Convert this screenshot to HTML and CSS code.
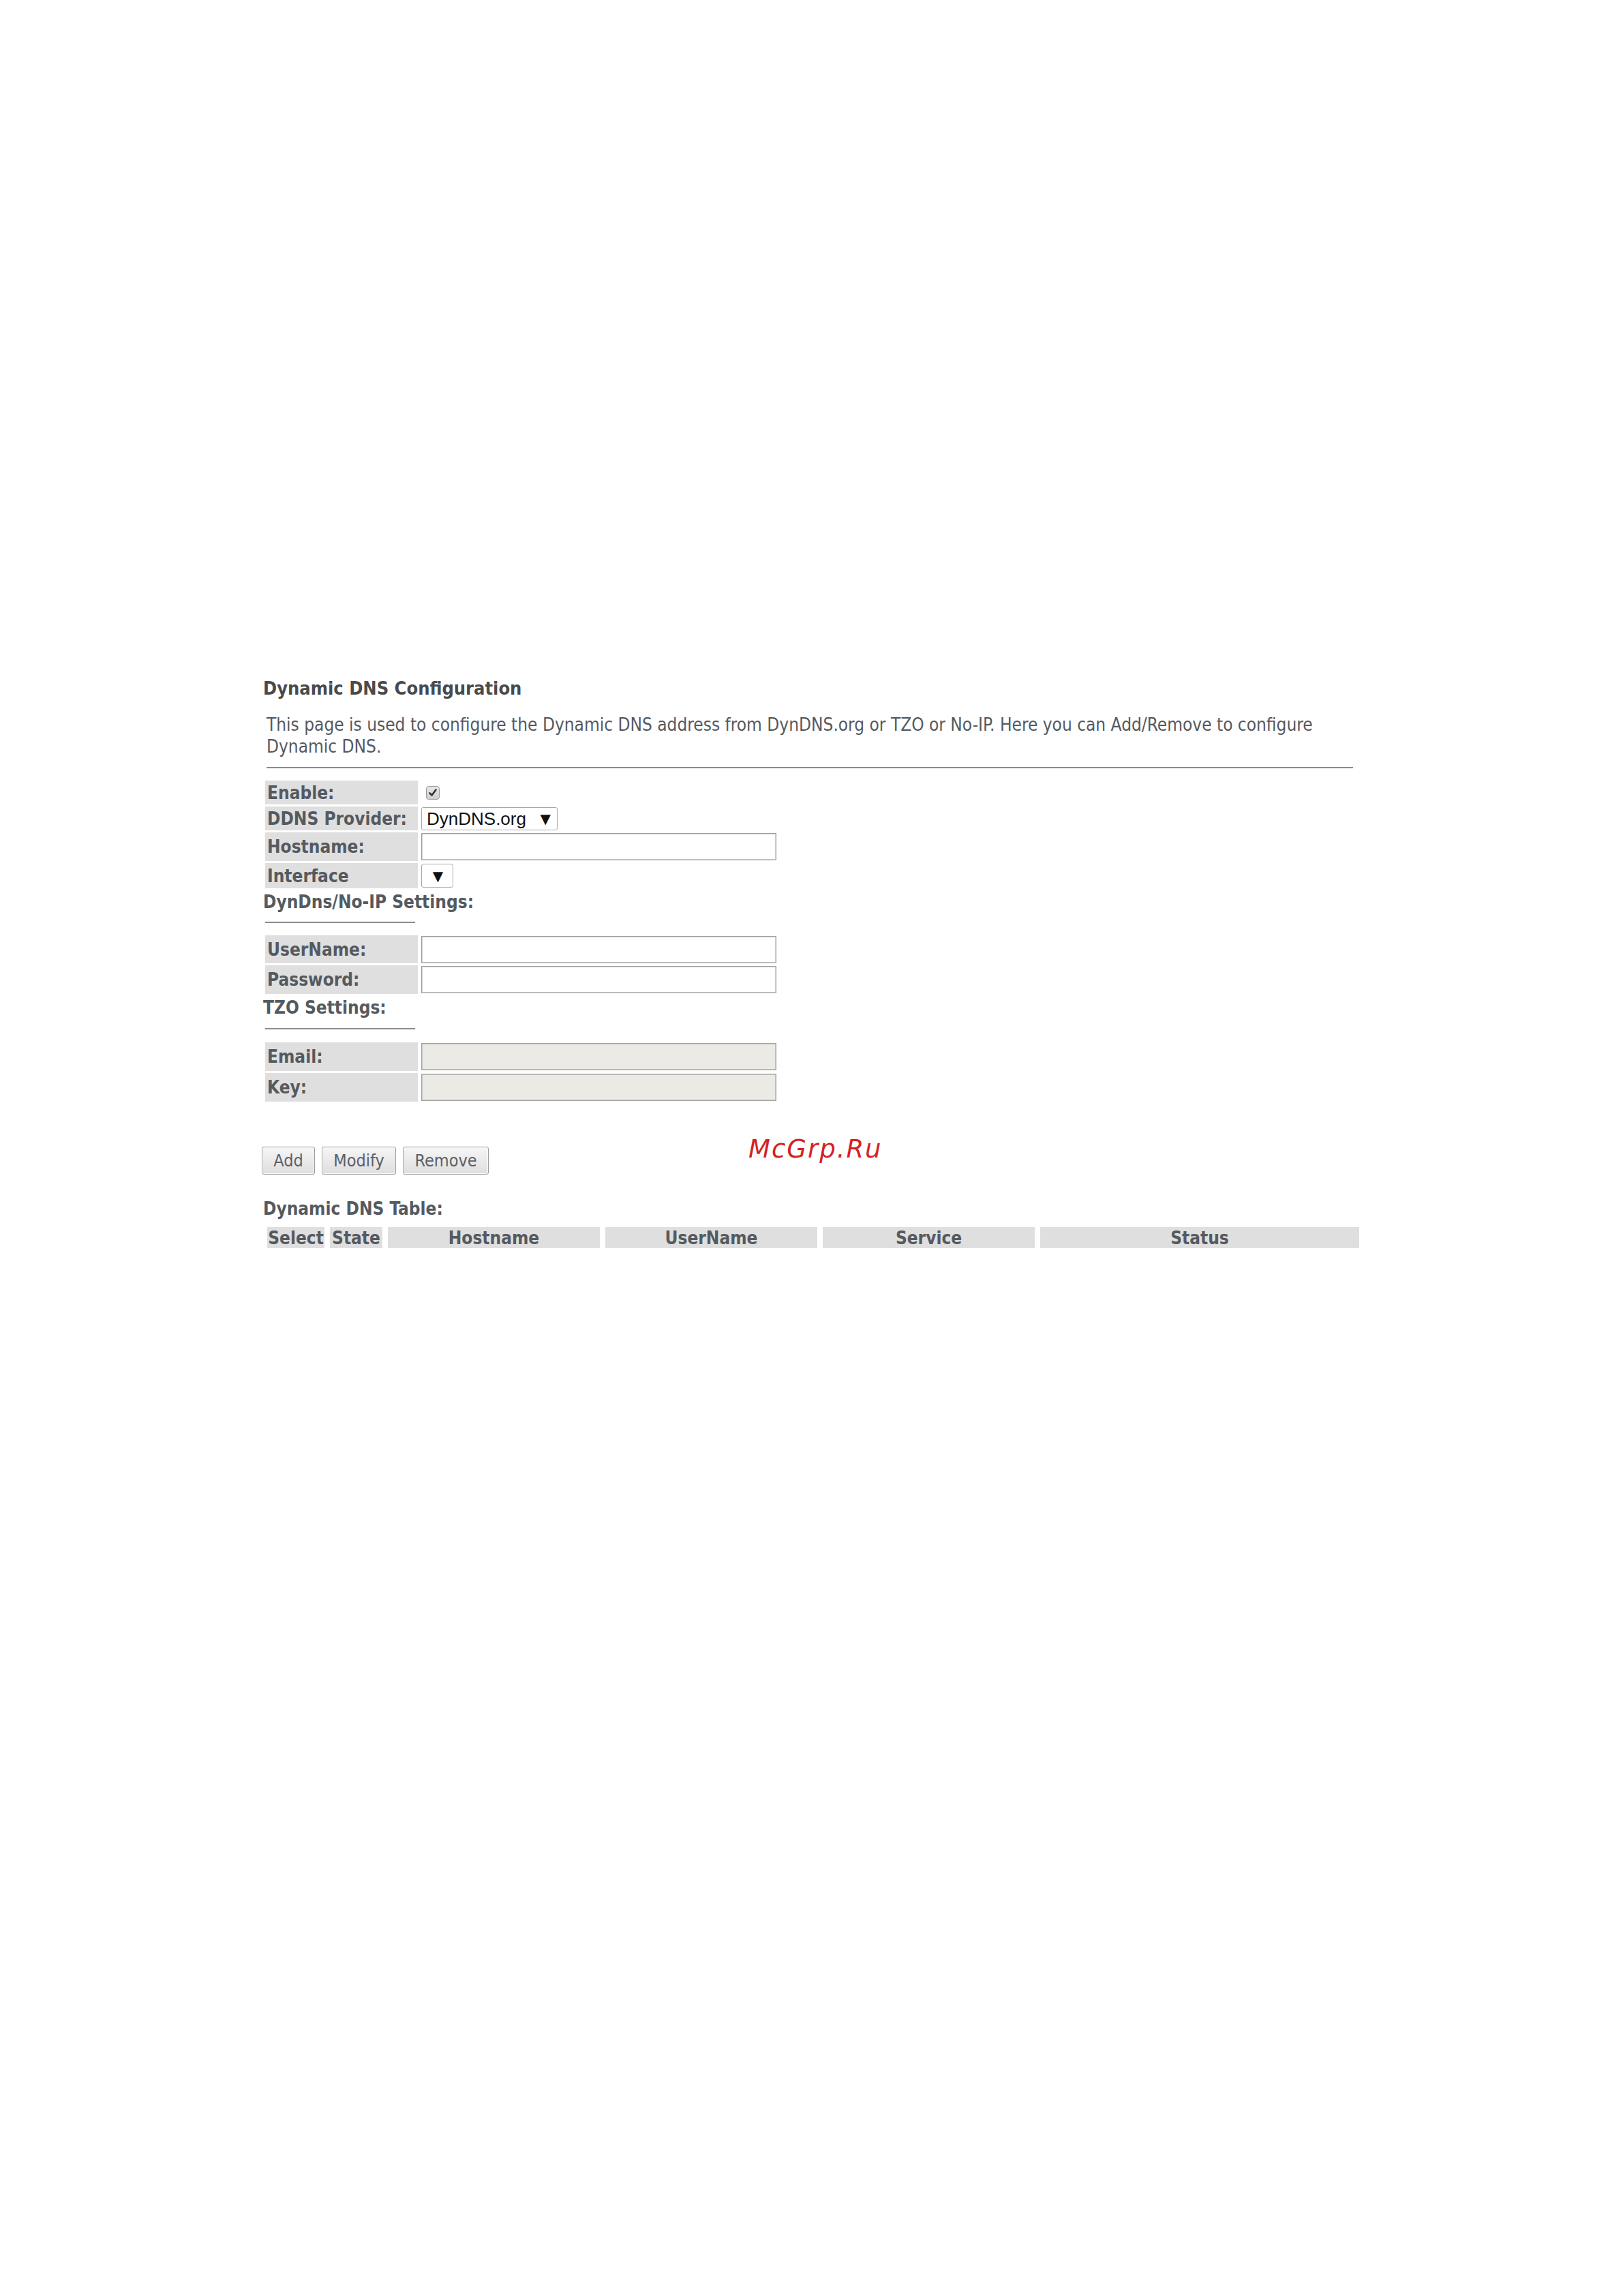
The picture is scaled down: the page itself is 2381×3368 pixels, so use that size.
FILE: index.html
```html
<!DOCTYPE html>
<html>
<head>
<meta charset="utf-8">
<title>Dynamic DNS Configuration</title>
<link rel="stylesheet" href="styles.css">
</head>
<body>
<div class="page">
  <div class="title">Dynamic DNS Configuration</div>
  <div class="desc">This page is used to configure the Dynamic DNS address from DynDNS.org or TZO or No-IP. Here you can Add/Remove to configure Dynamic DNS.</div>
  <div class="rule"></div>

  <table class="form first">
    <tr class="h35"><td class="lbl">Enable:</td><td class="val"><span class="check"><svg viewBox="0 0 20 20" width="20" height="20"><path d="M5.5 10.5 L8.5 13.5 L14.5 5.5" fill="none" stroke="#333" stroke-width="2.6" stroke-linecap="round" stroke-linejoin="round"/></svg></span></td></tr>
    <tr class="h35"><td class="lbl">DDNS Provider:</td><td class="val"><span class="select provider"><span class="sel-text">DynDNS.org</span><span class="arrow">▼</span></span></td></tr>
    <tr class="h42"><td class="lbl">Hostname:</td><td class="val"><input class="text" type="text"></td></tr>
    <tr class="h37"><td class="lbl">Interface</td><td class="val"><span class="select iface"><span class="arrow">▼</span></span></td></tr>
  </table>

  <div class="section">DynDns/No-IP Settings:</div>
  <div class="short-rule"></div>
  <table class="form">
    <tr class="h41"><td class="lbl">UserName:</td><td class="val"><input class="text" type="text"></td></tr>
    <tr class="h42"><td class="lbl">Password:</td><td class="val"><input class="text" type="password"></td></tr>
  </table>

  <div class="section">TZO Settings:</div>
  <div class="short-rule tzo"></div>
  <table class="form">
    <tr class="h42"><td class="lbl">Email:</td><td class="val"><input class="text disabled" type="text" disabled></td></tr>
    <tr class="h42"><td class="lbl">Key:</td><td class="val"><input class="text disabled" type="text" disabled></td></tr>
  </table>

  <div class="buttons">
    <button class="btn add">Add</button>
    <button class="btn modify">Modify</button>
    <button class="btn remove">Remove</button>
  </div>

  <div class="section table-title">Dynamic DNS Table:</div>
  <table class="dns-table">
    <tr>
      <th class="c-select">Select</th>
      <th class="c-state">State</th>
      <th class="c-host">Hostname</th>
      <th class="c-user">UserName</th>
      <th class="c-service">Service</th>
      <th class="c-status">Status</th>
    </tr>
  </table>
</div>
<div class="watermark">McGrp.Ru</div>
</body>
</html>
```

FILE: styles.css
```css
html, body {
  margin: 0;
  padding: 0;
  background: #ffffff;
}

body {
  width: 2381px;
  height: 3368px;
  position: relative;
  font-family: "DejaVu Sans Condensed", "DejaVu Sans", sans-serif;
  color: #555555;
}

.page {
  padding: 994px 0 0 386px;
  width: 1620px;
}

.title {
  font-size: 27px;
  font-weight: bold;
  line-height: 32px;
  color: #4a4a4a;
}

.desc {
  margin-top: 21px;
  margin-left: 5px;
  width: 1602px;
  font-size: 26px;
  line-height: 32px;
  color: #555a60;
}

.rule {
  margin-top: 14px;
  margin-left: 5px;
  width: 1594px;
  height: 2px;
  background: #8c8c8c;
}

.form {
  border-spacing: 3px;
  border-collapse: separate;
  margin-top: 15px;
}

.lbl {
  width: 221px;
  padding: 0 0 0 3px;
  background: #dfdfdf;
  font-size: 26px;
  font-weight: bold;
  color: #555a60;
  white-space: nowrap;
  vertical-align: middle;
}

.val {
  padding: 0 0 0 2px;
  vertical-align: middle;
  font-size: 0;
}

.h35 td { height: 35px; }
.h37 td { height: 37px; }
.h41 td { height: 41px; }
.h42 td { height: 42px; }

.check {
  display: inline-block;
  width: 20px;
  height: 20px;
  margin-left: 7px;
  border: 1px solid #9a9a9a;
  border-radius: 4px;
  background: linear-gradient(#e8e8e8, #cfcfcf);
  box-sizing: border-box;
  vertical-align: middle;
}

.check svg {
  display: block;
  margin: -1px;
}

.select {
  display: inline-flex;
  align-items: center;
  box-sizing: border-box;
  border: 1px solid #a8a8a8;
  border-radius: 3px;
  background: #ffffff;
  font-family: "Liberation Sans", Arial, sans-serif;
  color: #111111;
  vertical-align: middle;
}

.select.provider {
  width: 200px;
  height: 34px;
  padding-left: 7px;
  font-size: 26px;
}

.select.iface {
  width: 47px;
  height: 35px;
  justify-content: center;
}

.sel-text {
  flex: 1;
  line-height: 30px;
}

.arrow {
  font-family: "DejaVu Sans", sans-serif;
  font-size: 20px;
  color: #111111;
  margin-right: 9px;
}

.select.iface .arrow {
  margin: 0;
  padding-left: 2px;
}

.text {
  box-sizing: border-box;
  width: 521px;
  height: 40px;
  margin: 0;
  border: 1px solid #9e9e9e;
  box-shadow: inset 0 0 0 1px #d0d0d0;
  background: #ffffff;
  vertical-align: middle;
}

.text.disabled {
  background: #ebeae4;
  border-color: #a4a4a4;
  box-shadow: inset 0 0 0 1px #c2c2c0;
}

.section {
  margin-top: 1px;
  font-size: 26px;
  font-weight: bold;
  line-height: 32px;
  color: #555a60;
}

.short-rule {
  margin: 13px 0 15px 3px;
  width: 220px;
  height: 2px;
  background: #8c8c8c;
}

.short-rule.tzo {
  margin: 14px 0 16px 3px;
}

.buttons {
  margin-top: 63px;
  margin-left: -2px;
  display: flex;
  gap: 10px;
}

.btn {
  box-sizing: border-box;
  height: 41px;
  padding: 0;
  border: 1px solid #9c9c9c;
  border-radius: 3px;
  background: linear-gradient(#f6f6f6, #dedede);
  box-shadow: inset 0 0 0 1px #f8f8f8;
  font-family: "DejaVu Sans Condensed", "DejaVu Sans", sans-serif;
  font-size: 25px;
  color: #5a6068;
}

.btn.add { width: 78px; }
.btn.modify { width: 109px; }
.btn.remove { width: 126px; }

.table-title {
  margin-top: 34px;
}

.dns-table {
  margin-top: 8px;
  margin-left: -2px;
  border-collapse: separate;
  border-spacing: 8px 3px;
}

.dns-table th {
  height: 31px;
  padding: 0;
  background: #dfdfdf;
  font-size: 26px;
  font-weight: bold;
  color: #555a60;
  text-align: center;
  white-space: nowrap;
  vertical-align: middle;
}

.c-select { width: 84px; }
.c-state { width: 77px; }
.c-host { width: 311px; }
.c-user { width: 311px; }
.c-service { width: 311px; }
.c-status { width: 468px; }

.watermark {
  position: absolute;
  left: 1098px;
  top: 1667px;
  font-family: "DejaVu Sans", sans-serif;
  font-style: italic;
  font-size: 37px;
  line-height: 37px;
  letter-spacing: 2px;
  color: #d42222;
}
```
